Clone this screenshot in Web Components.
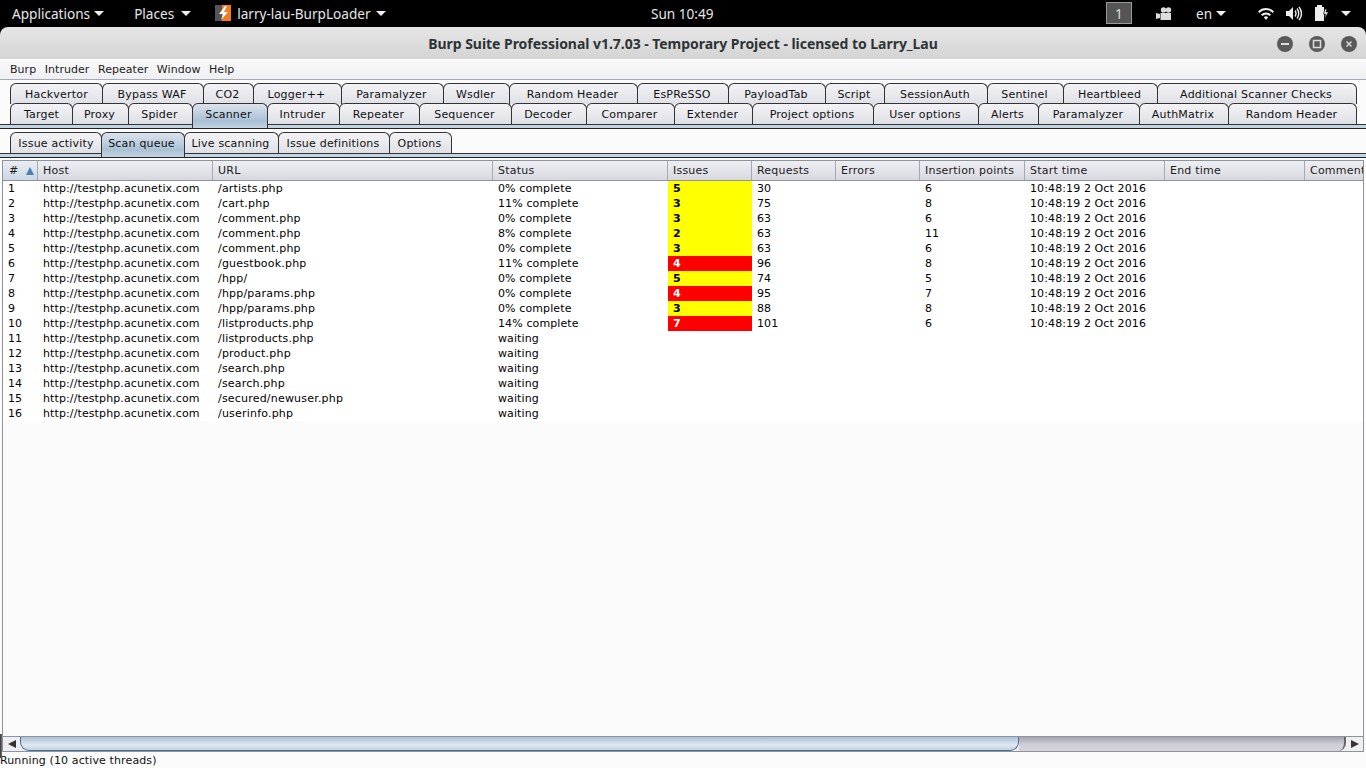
<!DOCTYPE html>
<html>
<head>
<meta charset="utf-8">
<title>Burp Suite</title>
<style>
    html, body { margin: 0; height: 100%; overflow: hidden; background: #fbfbfb; }
    body { font: 11px "DejaVu Sans", sans-serif; color: #000; }
    #desktop { display: flex; flex-direction: column; width: 1366px; height: 768px; }
</style>
</head>
<body>
<div id="desktop">
    <gnome-bar></gnome-bar>
    <title-bar>Burp Suite Professional v1.7.03 - Temporary Project - licensed to Larry_Lau</title-bar>
    <menu-bar></menu-bar>
    <tab-strip id="mainTabs" class="main"></tab-strip>
    <tab-strip id="subTabs" class="sub"></tab-strip>
    <queue-table></queue-table>
    <h-scroll></h-scroll>
    <status-line>Running (10 active threads)</status-line>
</div>

<script>
const arrow = '<svg width="10" height="5" viewBox="0 0 10 5"><path d="M0 0h10L5 5z" fill="#eee"/></svg>'

customElements.define('gnome-bar',
class extends HTMLElement {
    constructor () {
        super()
        this.attachShadow({ mode: 'open' }).innerHTML = `
<style>
    :host { display: flex; align-items: center; height: 27px; flex: none; box-sizing: border-box; padding-bottom: 1px;
        background: #000; color: #e6e6e6; font: 13.6px "Noto Sans", sans-serif; }
    .item { display: flex; align-items: center; gap: 5px; white-space: nowrap; }
    #left { display: flex; align-items: center; width: 651px; flex: none; }
    #apps { margin-left: 12px; gap: 4px; }
    #places { margin-left: 30px; gap: 7px; }
    #app { margin-left: 24px; }
    #app span { margin-left: 1px; }
    #clock { width: 455px; flex: none; }
    #right { display: flex; align-items: center; }
    #ws { width: 26px; height: 22px; background: #555; border: 1px solid #999; box-sizing: border-box; color: #ddd;
        display: flex; align-items: center; justify-content: center; margin-right: 24px; }
    svg { display: block; flex: none; }
</style>
<div id="left">
    <div class="item" id="apps">Applications ${arrow}</div>
    <div class="item" id="places">Places ${arrow}</div>
    <div class="item" id="app">
        <svg width="16" height="16" viewBox="0 0 16 16"><rect width="16" height="16" fill="#555"/><path d="M7 0h9v16H7z" fill="#f47b20"/><path d="M10 1 4 9h4l-2 6 7-8H9l3-6z" fill="#fff"/></svg>
        <span>larry-lau-BurpLoader</span> ${arrow}
    </div>
</div>
<div class="item" id="clock">Sun 10:49</div>
<div id="right">
    <div id="ws">1</div>
    <svg width="16" height="13" viewBox="0 0 16 13" style="margin-right:24px"><path d="M0 6l4 1v4l-4 1zM4.500 6H15v7H4.500z" fill="#ddd"/><circle cx="7.500" cy="3" r="2.700" fill="#ddd"/><circle cx="12.500" cy="3" r="2.700" fill="#ddd"/></svg>
    <span class="item" style="margin-right:32px;gap:4px">en ${arrow}</span>
    <svg width="16" height="13" viewBox="0 0 16 13" style="margin-right:12px"><path d="M0 4.500a11 11 0 0 1 16 0l-1.400 1.500a9 9 0 0 0-13.200 0zM3 7.500a7 7 0 0 1 10 0l-1.400 1.500a5 5 0 0 0-7.200 0zM5.800 10.200a3.200 3.200 0 0 1 4.400 0L8 13z" fill="#eee"/></svg>
    <svg width="16" height="15" viewBox="0 0 16 15" style="margin-right:12px"><path d="M0 5h3l4-4v13l-4-4H0z" fill="#eee"/><path d="M9 4.500q2 3 0 6M11 2.500q3.500 5 0 10M13 .8q5 6.700 0 13.400" stroke="#eee" stroke-width="1.400" fill="none"/></svg>
    <svg width="15" height="18" viewBox="0 0 15 18" style="margin-right:12px"><path d="M3 1h5v2h2v14H1V3h2z" fill="#eee"/><path d="M11 5l-1.500 5h2l-1 5 4-7h-2.500l1-3z" fill="#eee" stroke="#000" stroke-width=".6"/></svg>
    ${arrow}
</div>`
    }
})

customElements.define('title-bar',
class extends HTMLElement {
    constructor () {
        super()
        this.attachShadow({ mode: 'open' }).innerHTML = `
<style>
    :host { display: block; height: 32px; flex: none; background: #000; }
    #bar { display: flex; align-items: center; justify-content: center; height: 100%; position: relative;
        background: linear-gradient(#e6e6e6, #d4d4d4); border-radius: 8px 8px 0 0; color: #2e3436;
        font: bold 14px "Noto Sans", sans-serif; letter-spacing: -0.04px; }
    #btns { position: absolute; right: 9px; top: 9px; display: flex; gap: 16px; }
    svg { display: block; }
</style>
<div id="bar">
    <div><slot></slot></div>
    <div id="btns">
        <svg width="16" height="16" viewBox="0 0 16 16"><circle cx="8" cy="8" r="8" fill="#5a5a5a"/><rect x="4" y="7" width="8" height="2" fill="#ddd"/></svg>
        <svg width="16" height="16" viewBox="0 0 16 16"><circle cx="8" cy="8" r="8" fill="#5a5a5a"/><rect x="4.500" y="4.500" width="7" height="7" fill="none" stroke="#ddd" stroke-width="1.500"/></svg>
        <svg width="16" height="16" viewBox="0 0 16 16"><circle cx="8" cy="8" r="8" fill="#5a5a5a"/><path d="M5.500 5.500l5 5M10.500 5.500l-5 5" stroke="#ddd" stroke-width="1.400"/></svg>
    </div>
</div>`
    }
})

customElements.define('menu-bar',
class extends HTMLElement {
    constructor () {
        super()
        const items = ['Burp', 'Intruder', 'Repeater', 'Window', 'Help']
        this.attachShadow({ mode: 'open' }).innerHTML = `
<style>
    :host { display: flex; align-items: center; gap: 8.5px; height: 21px; flex: none; box-sizing: border-box; padding: 0 0 0 10px;
        background: linear-gradient(#fafafa, #eeeff2); border-bottom: 1px solid #a5a9b3; color: #222;
        font: 11px "DejaVu Sans", sans-serif; letter-spacing: 0.05px; }
</style>
${items.map(i => `<span>${i}</span>`).join('')}`
    }
})

customElements.define('burp-tab',
class extends HTMLElement {
    constructor () {
        super()
        this.attachShadow({ mode: 'open' }).innerHTML = `
<style>
    :host { display: flex; align-items: center; justify-content: center; box-sizing: border-box; height: 21px;
        flex: none; border: 1px solid #333; border-bottom: 0; border-radius: 6px 6px 0 0; margin-left: -1px;
        background: linear-gradient(#f3f3f6, #dfe0e6); color: #111; white-space: nowrap;
        font: 11px "DejaVu Sans", sans-serif; letter-spacing: 0.2px; padding: 1px 2px 0 0; }
    :host(:first-child) { margin-left: 0; padding-right: 0; }
    :host([active]) { height: 25px; margin-bottom: -4px; position: relative; z-index: 1; padding: 1px 3px 4px 0;
        background: linear-gradient(#dbe3ec, #a9c0d5 70%, #c3d4e3); }
</style>
<slot></slot>`
    }
})

customElements.define('tab-strip',
class extends HTMLElement {
    constructor () {
        super()
        this.attachShadow({ mode: 'open' }).innerHTML = `
<style>
    :host { display: block; flex: none; box-sizing: border-box; background: #fbfbfb; padding-top: 3px; }
    #rows { padding-left: 10px; }
    .row { display: flex; align-items: flex-start; height: 21px; }
    .row + .row { margin-top: -1px; }
    #rule { height: 5px; box-sizing: border-box; background: #c3d4e3; border-top: 1px solid #333; border-bottom: 1px solid #222; }
</style>
<div id="rows"></div>
<div id="rule"></div>`
    }

    // rows: [[label, right edge], ...] the widths come straight out of the screenshot
    setRows (rows, start) {
        const box = this.shadowRoot.querySelector('#rows')
        rows.forEach(r => {
            const row = document.createElement('div')
            row.className = 'row'
            let x = start
            r.forEach(([label, edge, active]) => {
                const tab = document.createElement('burp-tab')
                tab.textContent = label
                tab.style.width = (edge - x + 1) + 'px'
                if (active) tab.setAttribute('active', '')
                row.append(tab)
                x = edge
            })
            box.append(row)
        })
    }
})

customElements.define('queue-table',
class extends HTMLElement {
    constructor () {
        super()
        const cols = [
            ['#', 35], ['Host', 175], ['URL', 280], ['Status', 175], ['Issues', 84], ['Requests', 84],
            ['Errors', 84], ['Insertion points', 105], ['Start time', 140], ['End time', 140], ['Comment', 90]
        ]
        const data = [
            ['/artists.php', '0%', 5, 'y', 30, 6],
            ['/cart.php', '11%', 3, 'y', 75, 8],
            ['/comment.php', '0%', 3, 'y', 63, 6],
            ['/comment.php', '8%', 2, 'y', 63, 11],
            ['/comment.php', '0%', 3, 'y', 63, 6],
            ['/guestbook.php', '11%', 4, 'r', 96, 8],
            ['/hpp/', '0%', 5, 'y', 74, 5],
            ['/hpp/params.php', '0%', 4, 'r', 95, 7],
            ['/hpp/params.php', '0%', 3, 'y', 88, 8],
            ['/listproducts.php', '14%', 7, 'r', 101, 6],
            ['/listproducts.php'], ['/product.php'], ['/search.php'], ['/search.php'],
            ['/secured/newuser.php'], ['/userinfo.php']
        ]
        const grid = cols.map(c => c[1] + 'px').join(' ')
        const head = cols.map(c => c[0] === '#'
            ? `<div class="th sorted">#<svg width="8" height="8" viewBox="0 0 8 8"><path d="M4 0l4 8H0z" fill="#4f7fae"/></svg></div>`
            : `<div class="th">${c[0]}</div>`).join('')
        const rows = data.map((d, i) => {
            const [url, pct, issues, sev, reqs, points] = d
            return `<div class="tr">
                <div>${i + 1}</div><div>http://testphp.acunetix.com</div><div class="url">${url}</div>
                <div>${pct ? pct + ' complete' : 'waiting'}</div>
                <div class="${sev || ''}">${issues || ''}</div><div>${reqs || ''}</div><div></div><div>${points || ''}</div>
                <div>${pct ? '10:48:19 2 Oct 2016' : ''}</div><div></div><div></div>
            </div>`
        }).join('')
        this.attachShadow({ mode: 'open' }).innerHTML = `
<style>
    :host { display: block; flex: 1; min-height: 0; overflow: hidden; box-sizing: border-box; background: #fbfbfb;
        margin: 2px 2px 0 2px; border: 1px solid #8f939e; border-bottom: 0;
        font: 11px "DejaVu Sans", sans-serif; letter-spacing: 0.11px; }
    .head, .tr { display: grid; grid-template-columns: ${grid}; width: max-content; }
    .head { height: 19px; border-bottom: 1px solid #8f939e; letter-spacing: 0.22px; }
    .th { display: flex; align-items: center; box-sizing: border-box; padding-left: 5px; color: #222;
        background: linear-gradient(#eeeff3, #d8d9e0); border-right: 1px solid #a5a9b3; white-space: nowrap; overflow: hidden; }
    .th.sorted { padding-left: 6px; gap: 8px; background: linear-gradient(#e8edf3, #ccd8e5); }
    .tr { background: #fff; height: 15px; line-height: 15px; }
    .tr > div { padding-left: 5px; white-space: nowrap; overflow: hidden; }
    .tr > .url { letter-spacing: 0.2px; }
    .y { background: #ff0; font-weight: bold; color: #000; }
    .r { background: #f00; font-weight: bold; color: #fff; }
</style>
<div class="head">${head}</div>
${rows}`
    }
})

customElements.define('h-scroll',
class extends HTMLElement {
    constructor () {
        super()
        this.attachShadow({ mode: 'open' }).innerHTML = `
<style>
    :host { display: flex; align-items: stretch; height: 16px; flex: none; box-sizing: border-box; margin: 0 2px; position: relative;
        border: 1px solid #8f939e; background: #eeeff2; }
    /* dark sliver of the window behind, sticks out at the left */
    :host::before { content: ""; position: absolute; left: -3px; top: -3px; width: 2px; height: 24px; background: linear-gradient(90deg, #333, #777); }
    .btn { width: 17px; flex: none; display: flex; align-items: center; justify-content: center; }
    #thumb { width: 999px; flex: none; box-sizing: border-box; border: 1px solid #4d6d8c; border-width: 0 1px 1px;
        border-radius: 0 0 9px 9px; background: linear-gradient(#a9c0d6, #dfe8f1 60%, #c3d3e2); }
    #track { flex: 1; box-sizing: border-box; background: linear-gradient(#a2a5ae, #cfd0d8 55%, #d3d4dc);
        border-right: 2px solid #666; border-radius: 0 0 8px 0; }
    svg { display: block; }
</style>
<div class="btn"><svg width="8" height="8" viewBox="0 0 8 8"><path d="M8 0v8L0 4z" fill="#333"/></svg></div>
<div id="thumb"></div>
<div id="track"></div>
<div class="btn"><svg width="8" height="8" viewBox="0 0 8 8"><path d="M0 0v8l8-4z" fill="#333"/></svg></div>`
    }
})

customElements.define('status-line',
class extends HTMLElement {
    constructor () {
        super()
        this.attachShadow({ mode: 'open' }).innerHTML = `
<style>
    :host { display: block; height: 16px; flex: none; background: #fbfbfb; color: #111; overflow: hidden;
        font: 11px/18px "DejaVu Sans", sans-serif; letter-spacing: 0.12px; }
</style>
<slot></slot>`
    }
})

document.querySelector('#mainTabs').setRows([
    [['Hackvertor', 102], ['Bypass WAF', 203], ['CO2', 253], ['Logger++', 341], ['Paramalyzer', 443], ['Wsdler', 509],
     ['Random Header', 637], ['EsPReSSO', 728], ['PayloadTab', 825], ['Script', 884], ['SessionAuth', 987],
     ['Sentinel', 1063], ['Heartbleed', 1157], ['Additional Scanner Checks', 1356]],
    [['Target', 72], ['Proxy', 128], ['Spider', 192], ['Scanner', 267, true], ['Intruder', 339], ['Repeater', 419],
     ['Sequencer', 511], ['Decoder', 586], ['Comparer', 674], ['Extender', 752], ['Project options', 873],
     ['User options', 978], ['Alerts', 1038], ['Paramalyzer', 1139], ['AuthMatrix', 1228], ['Random Header', 1356]]
], 10)
document.querySelector('#subTabs').setRows([
    [['Issue activity', 101], ['Scan queue', 184, true], ['Live scanning', 278], ['Issue definitions', 389], ['Options', 451]]
], 10)
</script>
</body>
</html>
